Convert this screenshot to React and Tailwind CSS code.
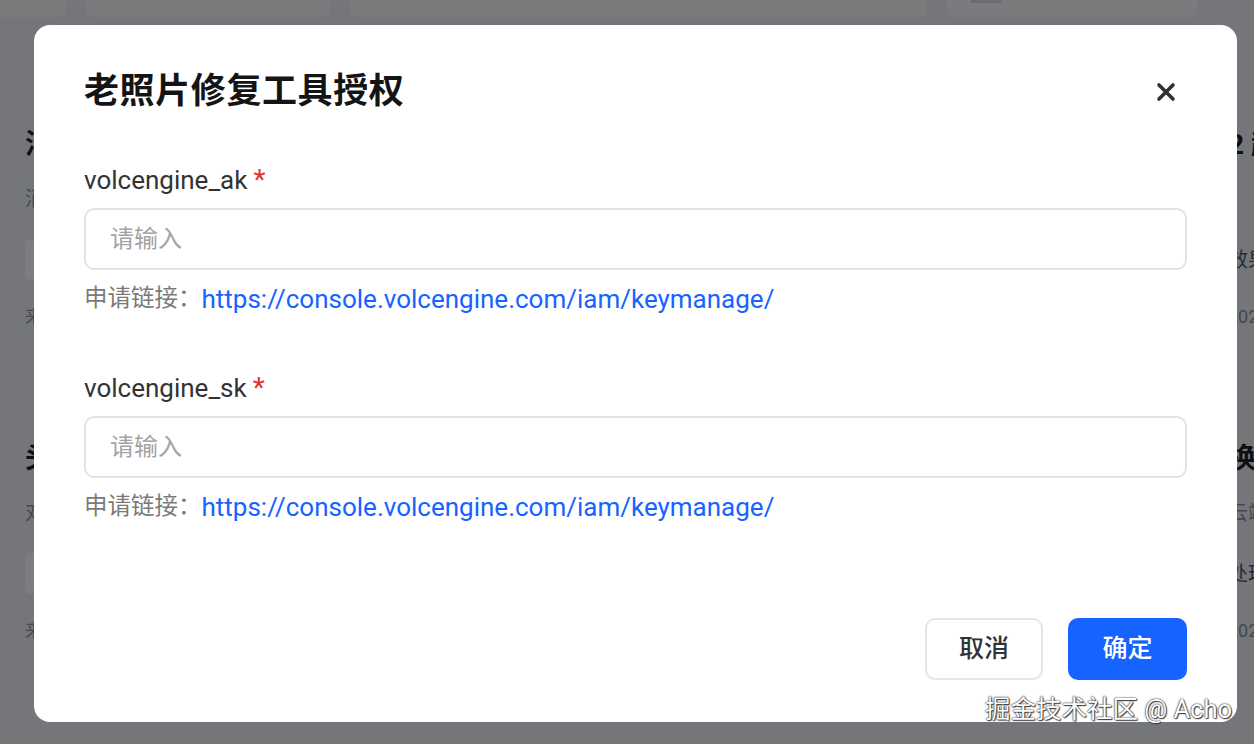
import React from 'react';

const FONT = { fontFamily: 'Roboto, "Noto Sans CJK SC", "Noto Sans", sans-serif' };

const leftItems = [
  { title: '消除图片水印与杂物', desc: '消除图片中的水印、文字和杂物', source: '来源：火山引擎 · 2024-03-12' },
  { title: '头像风格化生成', desc: '对人像照片进行风格化处理', source: '来源：火山引擎 · 2024-03-10' },
];

const rightItems = [
  { title: '2 超清', desc: '', extra: '效果增强', date: '2024-03-08' },
  { title: '换脸', desc: '云端处理', extra: '处理速度快', date: '2024-03-05' },
];

function BgItem({ item, right }) {
  return (
    <div className="pt-[50px] pb-[60px] border-b border-[#dfe2e8]">
      <div className="h-[40px] flex items-center text-[28px] font-bold text-[#1d2129] whitespace-nowrap">
        {item.title}
      </div>
      <div className="mt-[20px] h-[28px] flex items-center text-[20px] text-[#86909c] whitespace-nowrap">
        {item.desc}
      </div>
      {right ? (
        <div className="mt-[26px] h-[41px] flex items-center text-[20px] text-[#4e5969] whitespace-nowrap">
          {item.extra}
        </div>
      ) : (
        <div className="mt-[26px] h-[41px] w-[420px] rounded-md bg-[#f9fafc]" />
      )}
      <div className="mt-[24px] h-[24px] flex items-center text-[18px] text-[#86909c] whitespace-nowrap">
        {right ? item.date : item.source}
      </div>
    </div>
  );
}

function CloseIcon() {
  return (
    <svg width="22" height="22" viewBox="0 0 22 22" fill="none">
      <path d="M4 4L18 18M18 4L4 18" stroke="#2f3033" strokeWidth="3.6" strokeLinecap="round" />
    </svg>
  );
}

function Field({ label }) {
  return (
    <div>
      <div className="h-[32px] flex items-center text-[26px] text-[#333333]">
        {label}
        <span className="ml-[6px] text-[#e5322d] text-[28px] leading-none">*</span>
      </div>
      <input
        placeholder="请输入"
        className="mt-[12px] w-full h-[62px] rounded-[10px] border-2 border-[#e3e3e3] px-[24px] text-[24px] text-[#333] placeholder:text-[#a3a3a3] outline-none"
      />
      <div className="mt-[13px] h-[32px] flex items-center text-[23.5px] text-[#7a7a7a]">
        申请链接：
        <a href="#" className="text-[26px] text-[#1664ff]">
          https://console.volcengine.com/iam/keymanage/
        </a>
      </div>
    </div>
  );
}

export default function App() {
  return (
    <div className="relative w-[1254px] h-[744px] overflow-hidden bg-[#ebedf3]" style={FONT}>
      {/* page behind the dialog */}
      <div className="flex gap-[20px] h-[17px]">
        <div className="w-[66px] bg-[#f6f7fa] rounded-br-lg" />
        <div className="w-[244px] bg-[#f6f7fa] rounded-b-lg" />
        <div className="w-[577px] bg-[#f6f7fa] rounded-b-lg" />
        <div className="w-[250px] bg-[#f6f7fa] rounded-b-lg pl-[24px]">
          <div className="w-[30px] h-[3px] bg-[#d5d8de]" />
        </div>
      </div>
      <div className="mt-[57px] border-t border-[#dfe2e8] flex gap-[23px] pl-[25px]">
        <div className="w-[1180px] shrink-0">
          {leftItems.map((it) => (
            <BgItem key={it.title} item={it} />
          ))}
        </div>
        <div className="w-[400px] shrink-0">
          {rightItems.map((it) => (
            <BgItem key={it.title} item={it} right />
          ))}
        </div>
      </div>

      {/* mask */}
      <div className="absolute inset-0 bg-black/50" />

      {/* dialog */}
      <div className="absolute left-[34px] top-[25px] w-[1203px] h-[697px] bg-white rounded-[16px] pt-[45px] px-[50px] pb-[42px] flex flex-col">
        <div className="h-[44px] flex items-center justify-between">
          <h2 className="text-[35px] font-semibold text-[#141414] tracking-[0.6px]">老照片修复工具授权</h2>
          <button className="w-[42px] h-[42px] flex items-center justify-center">
            <CloseIcon />
          </button>
        </div>

        <div className="mt-[50px]">
          <Field label="volcengine_ak" />
        </div>
        <div className="mt-[57px]">
          <Field label="volcengine_sk" />
        </div>

        <div className="mt-auto flex justify-end gap-[25px]">
          <button className="w-[118px] h-[62px] rounded-[10px] border-2 border-[#e6e6e6] bg-white text-[25px] font-medium text-[#333333]">
            取消
          </button>
          <button className="w-[119px] h-[62px] rounded-[10px] bg-[#1664ff] text-[25px] font-medium text-white">
            确定
          </button>
        </div>
      </div>

      {/* watermark */}
      <div className="absolute right-[22px] top-[692px] text-[25.5px] leading-[34px] text-white [text-shadow:0_0_1px_#222,0_0_2px_#333,1px_1px_1px_#444]">
        掘金技术社区 @ Acho
      </div>
    </div>
  );
}
